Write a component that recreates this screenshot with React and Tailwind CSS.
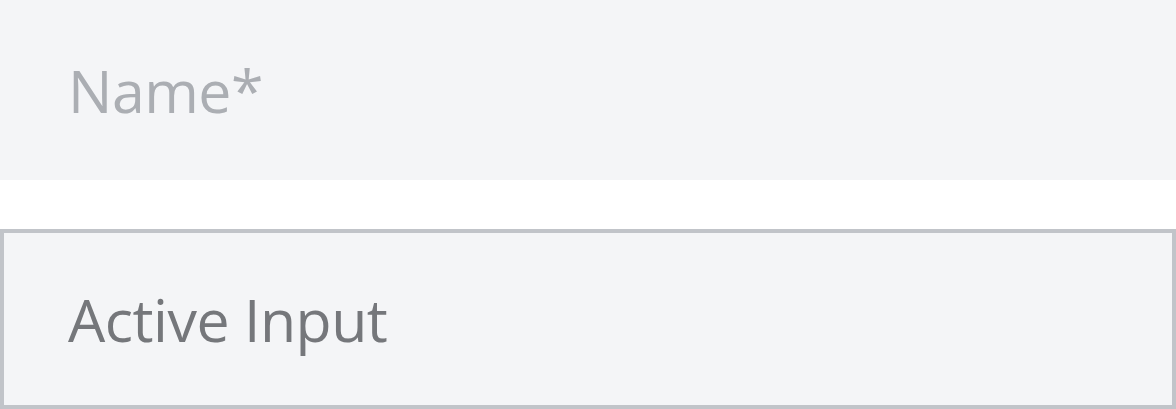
import React from 'react';

const App = () => {
  return (
    <div className="flex flex-col w-[1176px] bg-white" style={{ fontFamily: '"Open Sans", sans-serif' }}>
      {/* Default input */}
      <input
        type="text"
        placeholder="Name*"
        className="h-[180px] w-full bg-[#f4f5f7] pl-[68px] text-[59px] tracking-[-0.5px] text-[#75777b] placeholder:text-[#abaeb3] outline-none"
      />

      {/* Active input */}
      <input
        type="text"
        defaultValue="Active Input"
        className="mt-[49px] h-[180px] w-full border-4 border-[#c1c4c9] bg-[#f4f5f7] pl-[64px] text-[59px] tracking-[-0.5px] text-[#75777b] outline-none"
      />
    </div>
  );
};

export default App;
